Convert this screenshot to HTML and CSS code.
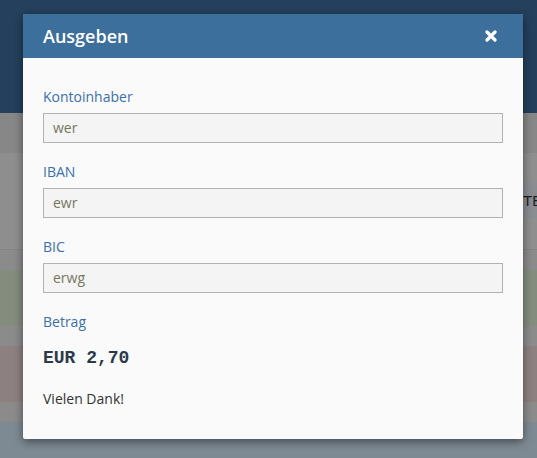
FILE: index.html
```html
<!DOCTYPE html>
<html lang="de">
<head>
<meta charset="utf-8">
<title>Ausgeben</title>
<link rel="stylesheet" href="styles.css">
</head>
<body>
<div class="page">
  <div class="topbar"></div>
  <div class="band band-a"></div>
  <div class="band band-b">
    <div class="row-gap"></div>
    <div class="row-head"><span class="row-head-cell">TE</span></div>
  </div>
  <div class="band band-line"></div>
  <div class="band band-c"></div>
  <div class="band band-green"></div>
  <div class="band band-c"></div>
  <div class="band band-red"></div>
  <div class="band band-c"></div>
  <div class="band band-blue"></div>
</div>

<div class="modal">
  <div class="modal-header">
    <h4 class="modal-title">Ausgeben</h4>
    <svg class="close" width="12" height="12" viewBox="0 0 12 12" aria-label="Schließen">
      <path d="M2 2 L10 10 M10 2 L2 10" stroke="#fff" stroke-width="3.2" stroke-linecap="round"/>
    </svg>
  </div>
  <div class="modal-body">
    <div class="form-group">
      <label class="label">Kontoinhaber</label>
      <div class="input">wer</div>
    </div>
    <div class="form-group">
      <label class="label">IBAN</label>
      <div class="input">ewr</div>
    </div>
    <div class="form-group">
      <label class="label">BIC</label>
      <div class="input">erwg</div>
    </div>
    <div class="form-group amount-group">
      <label class="label">Betrag</label>
      <div class="amount">EUR 2,70</div>
    </div>
    <p class="thanks">Vielen Dank!</p>
  </div>
</div>
</body>
</html>
```

FILE: styles.css
```css
html, body {
  margin: 0;
  padding: 0;
}
body {
  width: 537px;
  height: 458px;
  overflow: hidden;
  position: relative;
  font-family: "Open Sans", "Liberation Sans", sans-serif;
  background: #7e8a93;
}
.page {
  display: flex;
  flex-direction: column;
}
.topbar {
  height: 113px;
  background: #24405c;
}
.band-a {
  height: 40px;
  background: #878787;
}
.band-b {
  height: 96px;
  background: #8e8e8e;
  display: flex;
  flex-direction: column;
}
.row-gap {
  height: 30px;
}
.row-head {
  height: 35px;
  display: flex;
  justify-content: flex-end;
}
.row-head-cell {
  width: 40px;
  padding-left: 0;
  background: #898d92;
  color: #1e1e1e;
  font-family: "Liberation Sans", Arial, sans-serif;
  font-size: 15px;
  line-height: 35px;
  overflow: hidden;
  white-space: nowrap;
  box-sizing: border-box;
  margin-right: -26px;
}
.band-line {
  height: 1px;
  background: #858585;
}
.band-c {
  height: 20px;
  background: #8b8b8b;
}
.band-green {
  height: 56px;
  background: #848c7e;
}
.band-red {
  height: 56px;
  background: #8d8080;
}
.band-blue {
  height: 36px;
  background: #7e8a93;
}

.modal {
  position: absolute;
  left: 23px;
  top: 14px;
  width: 500px;
  background: #fafafa;
  box-shadow: 0 3px 10px rgba(0, 0, 0, 0.45);
  border-radius: 0 0 2px 2px;
}
.modal-header {
  height: 44px;
  background: #3c6f9b;
  display: flex;
  align-items: center;
  justify-content: space-between;
  padding: 0 26px 0 20px;
}
.modal-title {
  margin: 0;
  color: #fff;
  font-size: 18px;
  font-weight: 600;
  line-height: 24px;
}
.close {
  display: block;
}
.modal-body {
  padding: 29px 20px 30px;
}
.form-group {
  margin-bottom: 19px;
}
.label {
  display: block;
  color: #3a70aa;
  font-size: 14px;
  line-height: 20px;
  margin-bottom: 6px;
}
.input {
  height: 30px;
  box-sizing: border-box;
  border: 1px solid #b2b2b2;
  background: #f4f4f4;
  color: #76775f;
  font-size: 14px;
  line-height: 28px;
  padding: 0 9px;
}
.amount-group {
  margin-top: 19px;
  margin-bottom: 0;
}
.amount {
  font-family: "Liberation Mono", "Courier New", monospace;
  font-weight: 700;
  font-size: 18px;
  line-height: 24px;
  color: #2c3a4a;
  margin-top: 14px;
}
.thanks {
  margin: 19px 0 0;
  color: #333;
  font-size: 14px;
  line-height: 20px;
}
```
